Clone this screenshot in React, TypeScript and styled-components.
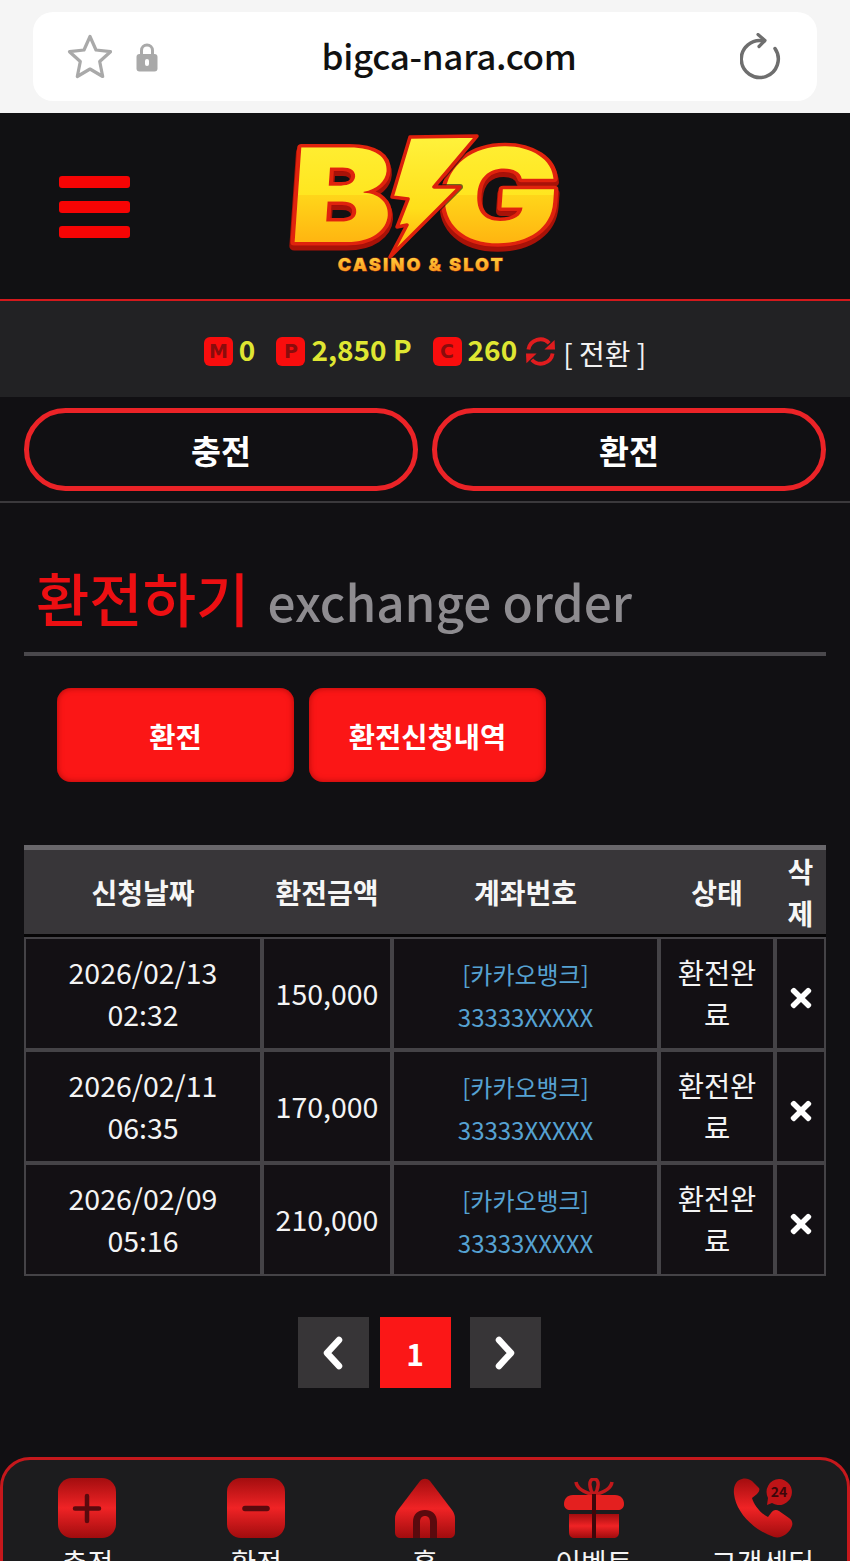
import styled, { createGlobalStyle } from "styled-components";
import { FaTimes } from "react-icons/fa";

const FONT = `"Noto Sans CJK KR", "Noto Sans", sans-serif`;
const LOGO_FONT = `Inter, "Liberation Sans", sans-serif`;
const BOLT = "122,4 189,3 146,54 172,54 102,124 119,92 109,94 120,66 104,64";

const rows = [
  { date: "2026/02/13", time: "02:32", amount: "150,000" },
  { date: "2026/02/11", time: "06:35", amount: "170,000" },
  { date: "2026/02/09", time: "05:16", amount: "210,000" },
];

const NavGradient = ({ id }: { id: string }) => (
  <defs>
    <linearGradient id={id} x1="0" y1="0" x2="0" y2="1">
      <stop offset="0" stopColor="#a30d0f" />
      <stop offset="0.5" stopColor="#f02325" />
      <stop offset="1" stopColor="#a00c0e" />
    </linearGradient>
  </defs>
);

const PlusIcon = () => (
  <svg width="60" height="60" viewBox="0 0 60 60">
    <NavGradient id="navPlus" />
    <rect x="1" y="0" width="58" height="60" rx="14" fill="url(#navPlus)" />
    <path d="M30 18v25M18 30.500h24" stroke="#5a0a0e" strokeWidth="4.500" strokeLinecap="round" />
  </svg>
);

const MinusIcon = () => (
  <svg width="60" height="60" viewBox="0 0 60 60">
    <NavGradient id="navMinus" />
    <rect x="1" y="0" width="58" height="60" rx="14" fill="url(#navMinus)" />
    <path d="M19 30.500h22" stroke="#5a0a0e" strokeWidth="5.500" strokeLinecap="round" />
  </svg>
);

const HomeIcon = () => (
  <svg width="60" height="60" viewBox="0 0 60 60">
    <NavGradient id="navHome" />
    <path
      d="M25 3C28 0 32 0 35 3L57 32C59 35 60 37 60 41V54C60 58 58 60 54 60H6C2 60 0 58 0 54V41C0 37 1 35 3 32Z"
      fill="url(#navHome)"
    />
    <path d="M18 60V44C18 36 23 32 30 32C37 32 42 36 42 44V60H35V44C35 40 33 38 30 38C27 38 25 40 25 44V60Z" fill="#5a0a0e" />
  </svg>
);

const GiftIcon = () => (
  <svg width="60" height="60" viewBox="0 0 60 60">
    <NavGradient id="navGift" />
    <path
      d="M30 17C22 15 13 11 12 4M30 17C25 11 24 1 30 1C36 1 35 11 30 17M30 17C38 15 47 11 48 4"
      fill="none"
      stroke="#c2181b"
      strokeWidth="3.500"
    />
    <path d="M9 17H51C57 17 60 21 60 26C60 30 57 32 54 32H6C3 32 0 30 0 26C0 21 3 17 9 17Z" fill="#e4201f" />
    <path d="M5 36H55V54C55 58 53 60 49 60H11C7 60 5 58 5 54Z" fill="url(#navGift)" />
    <path d="M28 16h4v44h-4z" fill="#3d070a" />
  </svg>
);

const PhoneIcon = () => (
  <svg width="60" height="60" viewBox="0 0 60 60">
    <NavGradient id="navPhone" />
    <path
      d="M9 1C4 2 0 7 1 16C3 34 20 52 41 59C48 61 56 56 59 48C60 45 59 42 56 40L46 33C43 31 40 32 38 35L35 39C28 36 21 27 19 20L24 16C26 14 27 12 26 10L19 3C16 1 13 0 9 1Z"
      fill="url(#navPhone)"
    />
    <path d="M46 1A13 13 0 1 1 39 25L34 27L35 20A13 13 0 0 1 46 1Z" fill="#bf1417" />
    <text x="46" y="19" textAnchor="middle" fontFamily={FONT} fontWeight="700" fontSize="14" fill="#3d070a">
      24
    </text>
  </svg>
);

const navItems = [
  { label: "충전", Icon: PlusIcon },
  { label: "환전", Icon: MinusIcon },
  { label: "홈", Icon: HomeIcon },
  { label: "이벤트", Icon: GiftIcon },
  { label: "고객센터", Icon: PhoneIcon },
];

const LogoLetters = ({ fill, stroke, width, dy }: { fill: string; stroke: string; width: number; dy: number }) => (
  <g
    fontFamily={LOGO_FONT}
    fontWeight="900"
    fontSize="130"
    fill={fill}
    stroke={stroke}
    strokeWidth={width}
    paintOrder="stroke"
    strokeLinejoin="round"
    transform={`translate(0 ${dy})`}
  >
    <text x="-1" y="109" textLength="102" lengthAdjust="spacingAndGlyphs" transform="skewX(-4) translate(8 0)">
      B
    </text>
    <text x="148" y="109" textLength="120" lengthAdjust="spacingAndGlyphs" transform="skewX(-4) translate(8 0)">
      G
    </text>
  </g>
);

export default function App() {
  return (
    <>
      <GlobalStyle />
      <Page>
        <BrowserBar>
          <AddressBox>
            <svg width="48" height="48" viewBox="0 0 48 48" fill="none">
              <path
                d="M24 3.500L30 17L44.500 18.700L33.700 28.500L36.700 43.500L24 36L11.300 43.500L14.300 28.500L3.500 18.700L18 17Z"
                stroke="#a9a9a9"
                strokeWidth="3.200"
                strokeLinejoin="round"
              />
            </svg>
            <svg width="22" height="30" viewBox="0 0 22 30">
              <path d="M5.500 14V8.500a5.500 5.500 0 0 1 11 0V14" fill="none" stroke="#a9a9a9" strokeWidth="3" />
              <rect x="0.500" y="12" width="21" height="17.500" rx="3" fill="#a9a9a9" />
              <rect x="9" y="17" width="4" height="7" rx="2" fill="#fff" />
            </svg>
            <AddressText>bigca-nara.com</AddressText>
            <svg width="42" height="48" viewBox="0 0 42 48" fill="none">
              <path d="M24 8A18.500 18.500 0 1 0 35 15.500" stroke="#6e6e6e" strokeWidth="3.500" strokeLinecap="round" />
              <path d="M18 1.500L25 7.500L19 13.500" stroke="#6e6e6e" strokeWidth="3.200" strokeLinecap="round" strokeLinejoin="round" />
            </svg>
          </AddressBox>
        </BrowserBar>

        <Header>
          <Burger>
            <BurgerLine />
            <BurgerLine />
            <BurgerLine />
          </Burger>
          <svg width="286" height="186" viewBox="-10 -20 286 186">
            <defs>
              <linearGradient id="logoFill" x1="0" y1="0" x2="0" y2="1">
                <stop offset="0" stopColor="#fff23c" />
                <stop offset="0.5" stopColor="#ffe620" />
                <stop offset="0.5" stopColor="#ffd61a" />
                <stop offset="1" stopColor="#ffa00a" />
              </linearGradient>
              <linearGradient id="boltFill" x1="0" y1="0" x2="0" y2="1">
                <stop offset="0" stopColor="#fff23c" />
                <stop offset="0.6" stopColor="#ffdf1a" />
                <stop offset="1" stopColor="#ffa90c" />
              </linearGradient>
              <linearGradient id="logoSmall" x1="0" y1="0" x2="0" y2="1">
                <stop offset="0" stopColor="#ffdc45" />
                <stop offset="1" stopColor="#f98a14" />
              </linearGradient>
            </defs>
            <LogoLetters fill="#a50d0c" stroke="#a81208" width={9} dy={4} />
            <LogoLetters fill="url(#logoFill)" stroke="#e0230d" width={7} dy={0} />
            <polygon points={BOLT} fill="#111113" stroke="#111113" strokeWidth="6" strokeLinejoin="round" opacity="0.6" />
            <polygon points={BOLT} fill="url(#boltFill)" stroke="#dc1f0c" strokeWidth="3.500" strokeLinejoin="round" />
            <text
              x="133.500"
              y="138"
              textAnchor="middle"
              fontFamily={LOGO_FONT}
              fontWeight="900"
              fontSize="18"
              letterSpacing="2.200"
              fill="url(#logoSmall)"
              stroke="#a8310a"
              strokeWidth="0.800"
              paintOrder="stroke"
            >
              CASINO &amp; SLOT
            </text>
          </svg>
        </Header>

        <BalanceBar>
          <BalanceItem>
            <CoinBadge>M</CoinBadge>
            <BalanceValue>0</BalanceValue>
          </BalanceItem>
          <BalanceItem>
            <CoinBadge>P</CoinBadge>
            <BalanceValue>2,850 P</BalanceValue>
          </BalanceItem>
          <BalanceItem>
            <CoinBadge>C</CoinBadge>
            <BalanceValue>260</BalanceValue>
          </BalanceItem>
          <SwapLink>
            <SwapIcon width="31" height="31" viewBox="0 0 32 32" fill="#e01c1e">
              <path d="M3.500 14A12.500 12.500 0 0 1 25 7.500M28.500 18A12.500 12.500 0 0 1 7 24.500" fill="none" stroke="#e01c1e" strokeWidth="4" />
              <polygon points="20,14 31,14 30.500,4" />
              <polygon points="12,18 1,18 1.500,28" />
            </SwapIcon>
            <SwapText>[ 전환 ]</SwapText>
          </SwapLink>
        </BalanceBar>

        <ActionRow>
          <PillButton>충전</PillButton>
          <PillButton>환전</PillButton>
        </ActionRow>

        <Content>
          <TitleRow>
            <TitleMain>환전하기</TitleMain>
            <TitleSub>exchange order</TitleSub>
          </TitleRow>

          <TabRow>
            <TabButton>환전</TabButton>
            <TabButton>환전신청내역</TabButton>
          </TabRow>

          <HistoryTable>
            <colgroup>
              <col width="238" />
              <col width="130" />
              <col width="267" />
              <col width="116" />
              <col width="51" />
            </colgroup>
            <thead>
              <tr>
                <HeadCell>신청날짜</HeadCell>
                <HeadCell>환전금액</HeadCell>
                <HeadCell>계좌번호</HeadCell>
                <HeadCell>상태</HeadCell>
                <HeadCell>삭제</HeadCell>
              </tr>
            </thead>
            <tbody>
              {rows.map((row) => (
                <tr key={row.date}>
                  <BodyCell>
                    {row.date}
                    <br />
                    {row.time}
                  </BodyCell>
                  <BodyCell>{row.amount}</BodyCell>
                  <AccountCell>
                    [카카오뱅크]
                    <br />
                    33333XXXXX
                  </AccountCell>
                  <BodyCell>환전완료</BodyCell>
                  <BodyCell>
                    <DeleteMark>
                      <FaTimes size={30} />
                    </DeleteMark>
                  </BodyCell>
                </tr>
              ))}
            </tbody>
          </HistoryTable>

          <Pager>
            <PageButton>
              <svg width="24" height="34" viewBox="0 0 24 34" fill="none">
                <path d="M18 4L6 17L18 30" stroke="#fff" strokeWidth="6.500" strokeLinecap="round" strokeLinejoin="round" />
              </svg>
            </PageButton>
            <PageButton $active>1</PageButton>
            <NextButton>
              <svg width="24" height="34" viewBox="0 0 24 34" fill="none">
                <path d="M6 4L18 17L6 30" stroke="#fff" strokeWidth="6.500" strokeLinecap="round" strokeLinejoin="round" />
              </svg>
            </NextButton>
          </Pager>
        </Content>

        <BottomNav>
          {navItems.map(({ label, Icon }) => (
            <NavItem key={label}>
              <Icon />
              <NavLabel>{label}</NavLabel>
            </NavItem>
          ))}
        </BottomNav>
      </Page>
    </>
  );
}

const GlobalStyle = createGlobalStyle`
  html, body {
    margin: 0;
    padding: 0;
    height: 1561px;
    overflow: hidden;
    background: #111013;
  }
  * {
    box-sizing: border-box;
  }
`;

const Page = styled.div`
  width: 850px;
  height: 1561px;
  overflow: hidden;
  font-family: ${FONT};
  background: #111013;
`;

const BrowserBar = styled.div`
  height: 113px;
  padding: 12px 33px;
  background: #f5f5f5;
`;

const AddressBox = styled.div`
  display: flex;
  align-items: center;
  height: 89px;
  padding: 0 35px 0 33px;
  gap: 22px;
  background: #fff;
  border-radius: 20px;
`;

const AddressText = styled.div`
  flex: 1;
  padding-bottom: 4px;
  text-align: center;
  font-size: 35px;
  font-weight: 500;
  color: #111;
  letter-spacing: -0.3px;
`;

const Header = styled.header`
  display: flex;
  align-items: center;
  gap: 148px;
  height: 188px;
  padding-left: 59px;
  background: #111113;
  border-bottom: 2px solid #d3191c;
`;

const Burger = styled.div`
  display: flex;
  flex-direction: column;
  gap: 13px;
  width: 71px;
  margin-top: 2px;
`;

const BurgerLine = styled.span`
  height: 12px;
  background: #f60404;
  border-radius: 3px;
`;

const BalanceBar = styled.div`
  display: flex;
  align-items: center;
  justify-content: center;
  height: 96px;
  background: #222224;
`;

const BalanceItem = styled.div`
  display: flex;
  align-items: center;
  gap: 6px;
  margin-right: 21px;
`;

const CoinBadge = styled.span`
  display: flex;
  align-items: center;
  justify-content: center;
  width: 29px;
  height: 29px;
  margin-top: 4px;
  border-radius: 6px;
  background: #f90d0d;
  color: #8a0c0c;
  font-family: "DejaVu Sans", sans-serif;
  font-size: 19px;
  font-weight: 700;
`;

const BalanceValue = styled.span`
  font-size: 28px;
  font-weight: 700;
  line-height: 36px;
  color: #dfe632;
`;

const SwapLink = styled.div`
  display: flex;
  align-items: center;
  gap: 7px;
  margin-left: -13px;
`;

const SwapIcon = styled.svg`
  margin-top: 4px;
`;

const SwapText = styled.span`
  padding-top: 8px;
  font-size: 28px;
  color: #f2f2f2;
`;

const ActionRow = styled.div`
  display: grid;
  grid-template-columns: 394px 394px;
  justify-content: space-between;
  height: 106px;
  padding: 11px 24px 0;
  border-bottom: 2px solid #3b393c;
`;

const PillButton = styled.button`
  height: 83px;
  border: 5px solid #eb2327;
  border-radius: 42px;
  background: #111013;
  color: #fff;
  font-family: ${FONT};
  font-size: 32.5px;
  font-weight: 700;
`;

const Content = styled.main`
  padding: 0 24px;
`;

const TitleRow = styled.div`
  display: flex;
  align-items: baseline;
  gap: 18px;
  height: 153px;
  padding: 52px 0 0 12px;
  border-bottom: 4px solid #4a484c;
`;

const TitleMain = styled.h2`
  margin: 0;
  font-size: 58px;
  font-weight: 500;
  line-height: 84px;
  color: #ec0f12;
`;

const TitleSub = styled.span`
  font-size: 49.5px;
  font-weight: 500;
  color: #8e8c90;
`;

const TabRow = styled.div`
  display: flex;
  gap: 15px;
  margin-top: 32px;
  padding-left: 33px;
`;

const TabButton = styled.button`
  width: 237px;
  height: 94px;
  border: 0;
  border-radius: 14px;
  background: #fb1616;
  box-shadow: inset 0 0 6px rgba(120, 0, 0, 0.6);
  color: #fff;
  font-family: ${FONT};
  font-size: 28.5px;
  font-weight: 700;
`;

const HistoryTable = styled.table`
  width: 802px;
  margin-top: 63px;
  table-layout: fixed;
  border-collapse: separate;
  border-spacing: 0;
  color: #f4f4f4;
`;

const HeadCell = styled.th`
  height: 91px;
  padding: 0;
  border-top: 5px solid #69676b;
  border-bottom: 3px solid #060506;
  background: #383639;
  font-size: 28px;
  font-weight: 700;
  line-height: 42px;
  color: #f6f6f6;
`;

const BodyCell = styled.td`
  height: 113px;
  padding: 0 8px 2px;
  border: 2px solid #454347;
  background: #131014;
  font-size: 28.5px;
  line-height: 42px;
  text-align: center;
  word-break: break-all;
`;

const AccountCell = styled(BodyCell)`
  padding: 2px 8px 0;
  font-size: 24px;
  line-height: 43px;
  color: #56a2d2;
`;

const DeleteMark = styled.span`
  display: flex;
  justify-content: center;
  padding-top: 10px;
  color: #fff;
`;

const Pager = styled.nav`
  display: flex;
  justify-content: center;
  gap: 11px;
  margin-top: 41px;
  padding-right: 12px;
`;

const PageButton = styled.button<{ $active?: boolean }>`
  display: flex;
  align-items: center;
  justify-content: center;
  width: 71px;
  height: 71px;
  padding: 0;
  border: 0;
  background: ${(props) => (props.$active ? "#fb1717" : "#373537")};
  color: #fff;
  font-family: ${FONT};
  font-size: 30px;
  font-weight: 700;
`;

const NextButton = styled(PageButton)`
  margin-left: 8px;
`;

const BottomNav = styled.nav`
  display: grid;
  grid-template-columns: repeat(5, 1fr);
  height: 180px;
  margin-top: 69px;
  padding: 18px 0 0;
  background: #1c1c1e;
  border: 3px solid #c5181c;
  border-radius: 30px 30px 0 0;
`;

const NavItem = styled.div`
  display: flex;
  flex-direction: column;
  align-items: center;
`;

const NavLabel = styled.span`
  margin-top: 4px;
  font-size: 28px;
  line-height: 40px;
  color: #f4f4f4;
`;
